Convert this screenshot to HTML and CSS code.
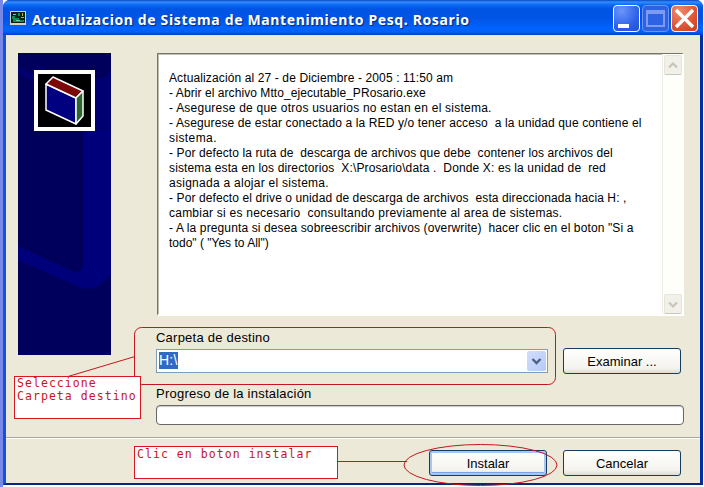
FILE: index.html
```html
<!DOCTYPE html>
<html lang="es">
<head>
<meta charset="utf-8">
<title>Actualizacion de Sistema</title>
<link rel="stylesheet" href="styles.css">
</head>
<body>
<div class="window">
  <header class="titlebar">
    <svg class="app-icon" width="16" height="14" viewBox="0 0 16 14"><path fill="#d5d0c8" d="M0 0h16v14H0z"/><path fill="#0d211a" d="M1 1h14v11H1z"/><path fill="#138a55" d="M2 5h3v2h4v2h5v2H3V8H2zM8 2h2v3H8z"/><path stroke="#d7a529" d="M12.5 2v3M11 6.5h3"/><path stroke="#79cda5" d="M3 3.5h3M6 9.5h4"/></svg>
    <h1>Actualizacion de Sistema de Mantenimiento Pesq. Rosario</h1>
    <div class="controls">
      <span class="control"><svg width="25" height="25"><path fill="#fff" d="M4 18h11v4H4z"/></svg></span>
      <span class="control disabled"><svg width="25" height="25"><path fill="none" stroke="#7c9cf4" stroke-width="2" d="M4 5h17v15H4zM4 7h17"/></svg></span>
      <span class="control close"><svg width="25" height="25"><path stroke="#fff" stroke-width="3.5" d="M4 4l17 17M21 4L4 21"/></svg></span>
    </div>
  </header>
  <main class="client">
    <div class="main">
      <aside class="banner">
        <svg width="93" height="302" viewBox="0 0 93 302">
          <path fill="#00005c" d="M0 0h93v302H0z"/>
          <path fill="#000080" d="M65 78h28v143l-12 12q-9 5-20 1L0 207v-14l56 26q9 3 9-9z" opacity=".85"/>
          <path fill="#000080" d="M0 12q14 12 30 14h47q10 0 16-8v66H65V60H16V30Q8 24 0 20z" opacity=".65"/>
          <path fill="#fff" d="M16 17h61v61H16z"/><path d="M20 21h53v53H20z"/>
          <g stroke="#fff" stroke-width="1.5" stroke-linejoin="round"><path fill="#000080" d="M28 31l30 14v26L28 57z"/><path fill="#7c0808" d="M28 31l7-7 30 14-7 7z"/><path fill="#2b672f" d="M58 45l7-7v25l-7 8z"/></g>
        </svg>
      </aside>
      <div class="form">
        <div class="notes">
          <div class="lines">
            <p class="l1">Actualización al 27 - de Diciembre - 2005 : 11:50 am</p>
            <p class="l2">- Abrir el archivo Mtto_ejecutable_PRosario.exe</p>
            <p class="l3">- Asegurese de que otros usuarios no estan en el sistema.</p>
            <p class="l4">- Asegurese de estar conectado a la RED y/o tener acceso  a la unidad que contiene el</p>
            <p class="l5">sistema.</p>
            <p class="l6">- Por defecto la ruta de  descarga de archivos que debe  contener los archivos del</p>
            <p class="l7">sistema esta en los directorios  X:\Prosario\data .  Donde X: es la unidad de  red</p>
            <p class="l8">asignada a alojar el sistema.</p>
            <p class="l9">- Por defecto el drive o unidad de descarga de archivos  esta direccionada hacia H: ,</p>
            <p class="l10">cambiar si es necesario  consultando previamente al area de sistemas.</p>
            <p class="l11">- A la pregunta si desea sobreescribir archivos (overwrite)  hacer clic en el boton "Si a</p>
            <p class="l12">todo" ( "Yes to All")</p>
          </div>
          <div class="scrollbar">
            <span><svg width="18" height="19"><path d="M5 11.5l4-4 4 4"/></svg></span>
            <span><svg width="18" height="19"><path d="M5 7.5l4 4 4-4"/></svg></span>
          </div>
        </div>
        <p class="label folder">Carpeta de destino</p>
        <div class="row">
          <div class="combo"><span class="selected">H:\</span><span class="arrow"><svg width="19" height="20"><path d="M5.5 8l4 4 4-4"/></svg></span></div>
          <div class="button">Examinar ...</div>
        </div>
        <p class="label progress-label">Progreso de la instalación</p>
        <div class="progress"></div>
      </div>
    </div>
    <footer class="actions">
      <div class="button default">Instalar</div>
      <div class="button">Cancelar</div>
    </footer>
  </main>
</div>
<svg class="marks" width="704" height="487" viewBox="0 0 704 487">
  <rect x="134.5" y="327.5" width="421" height="57" rx="7"/>
  <path d="M68 376.5L135 356.5M337 461.5h70"/>
  <ellipse cx="480.5" cy="465" rx="76.5" ry="20.5"/>
</svg>
<div class="note note-folder">Seleccione<br>Carpeta destino</div>
<div class="note note-install">Clic en boton instalar</div>
</body>
</html>
```
FILE: styles.css
```css
* { box-sizing: border-box; }
body { margin: 0; width: 704px; height: 487px; overflow: hidden; position: relative; padding-left: 3px; background: linear-gradient(90deg, #7888e8 3px, #fff 3px); font-family: "Liberation Sans", Arial, sans-serif; color: #000; }
p, h1 { margin: 0; }
svg { display: block; }
.window { width: 700px; height: 485px; display: flex; flex-direction: column; background: #0a3cc0; border-radius: 7px 7px 0 0; border: solid #0739b5; border-width: 0 3px 2px; border-left-color: #1552d8; border-right-color: #0030a4; border-bottom-color: #06277d; }
.titlebar { height: 35px; margin: 0 -3px; padding: 2px 5px 0 7px; display: flex; align-items: center; border-radius: 7px 7px 0 0; background: linear-gradient(#0a48bd 0, #338cff 2px, #0868f4 5px, #0054e3 9px, #0055e5 19px, #0064ff 29px, #0060f5 32px, #003cc4 35px); }
.app-icon { flex: none; margin-top: -1px; }
h1 { margin-left: 6px; padding-top: 2px; color: #fff; font: bold 14px/20px "Noto Sans", sans-serif; letter-spacing: .63px; white-space: nowrap; text-shadow: 1px 1px 1px #0a2777; }
.controls { display: flex; gap: 2px; margin-left: auto; }
.control { width: 27px; height: 27px; border: 1px solid #fff; border-radius: 4px; background: radial-gradient(circle at 30% 20%, #6b96fa, #2f62e9 60%, #1e4ed3); }
.disabled { border-color: #6d94f2; background: #2d62e5; }
.close { background: radial-gradient(circle at 30% 20%, #ee8b6c, #df5332 60%, #c63f1e); }
.client { flex: 1; background: #ece9d8; display: flex; flex-direction: column; }
.main { height: 403px; padding: 18px 16px 0 12px; display: flex; gap: 45px; border-bottom: 1px solid #aca899; }
.banner { width: 93px; height: 302px; flex: none; }
.form { flex: 1; display: flex; flex-direction: column; }
.notes { width: 527px; height: 263px; margin-left: 1px; display: flex; background: #fff; border: 2px solid #fff; border-top-color: #77746c; border-left-color: #77746c; border-top-width: 1px; border-left-width: 1px; box-shadow: inset 1px 1px #c0bdb2; }
.lines { flex: 1; padding: 17px 0 0 11px; font-size: 12px; line-height: 15px; letter-spacing: .12px; }
.lines p { width: max-content; white-space: pre; }
.lines .l2 { letter-spacing: .07px; }
.lines .l3, .lines .l10 { letter-spacing: .23px; }
.lines .l5 { letter-spacing: .4px; }
.lines .l6 { letter-spacing: .1px; }
.lines .l7 { letter-spacing: .13px; }
.lines .l8 { letter-spacing: .27px; }
.lines .l9 { letter-spacing: .1px; }
.lines .l12 { letter-spacing: 0; }
.scrollbar { width: 20px; display: flex; flex-direction: column; justify-content: space-between; padding: 1px 0 0 1px; border-left: 1px solid #eeede5; background: #fefefa; }
.scrollbar span { width: 18px; height: 20px; border: 1px solid #e6e5dc; border-bottom-color: #c9c8bd; border-radius: 2px; background: #f2f1e9; }
.scrollbar path { fill: none; stroke: #c7c5b8; stroke-width: 2.2; }
.scrollbar svg { margin-left: -1px; }
.label { font-size: 13px; line-height: 16px; width: max-content; letter-spacing: .23px; }
.folder { margin-top: 14px; }
.row { display: flex; align-items: center; gap: 15px; margin-top: 2px; height: 26px; }
.combo { width: 392px; height: 24px; border: 1px solid #7f9db9; background: #fff; display: flex; justify-content: space-between; padding: 1px 1px 1px 2px; }
.selected { background: #316ac5; color: #fff; font-size: 14px; height: 17px; line-height: 17px; margin-top: 1px; width: 19px; letter-spacing: .2px; }
.arrow { width: 19px; height: 20px; border-radius: 2px; background: linear-gradient(135deg, #d2defc, #b5c9f8); }
.arrow path { fill: none; stroke: #4d6185; stroke-width: 2.4; }
.button { width: 118px; height: 26px; border: 1px solid #153c63; border-radius: 3px; background: linear-gradient(#fff, #f4f3ee 80%, #dfdbce); font-size: 13px; line-height: 25px; text-align: center; }
.progress-label { margin-top: 12px; }
.progress { width: 528px; height: 20px; margin-top: 3px; border: 1px solid #686868; border-radius: 4px; background: #fff; box-shadow: inset 0 1px 1px #c8c8c8; }
.actions { flex: 1; border-top: 1px solid #fff; padding: 11px 19px 0 0; display: flex; gap: 16px; justify-content: flex-end; }
.default { box-shadow: inset 0 0 0 2px #a9c5f2, inset 0 -3px #7da2e5; }
.marks { position: absolute; left: 0; top: 0; fill: none; stroke: #c4161e; stroke-width: 1; }
.note { position: absolute; border: 1px solid #d81820; background: #fff; color: #c8141c; font-family: "DejaVu Sans Mono", monospace; font-size: 11.5px; line-height: 13px; padding: 0 2px; white-space: nowrap; letter-spacing: 1.05px; }
.note-folder { left: 14px; top: 376px; width: 127px; height: 43px; }
.note-install { left: 134px; top: 446px; width: 204px; height: 33px; padding-top: 1px; }
```
